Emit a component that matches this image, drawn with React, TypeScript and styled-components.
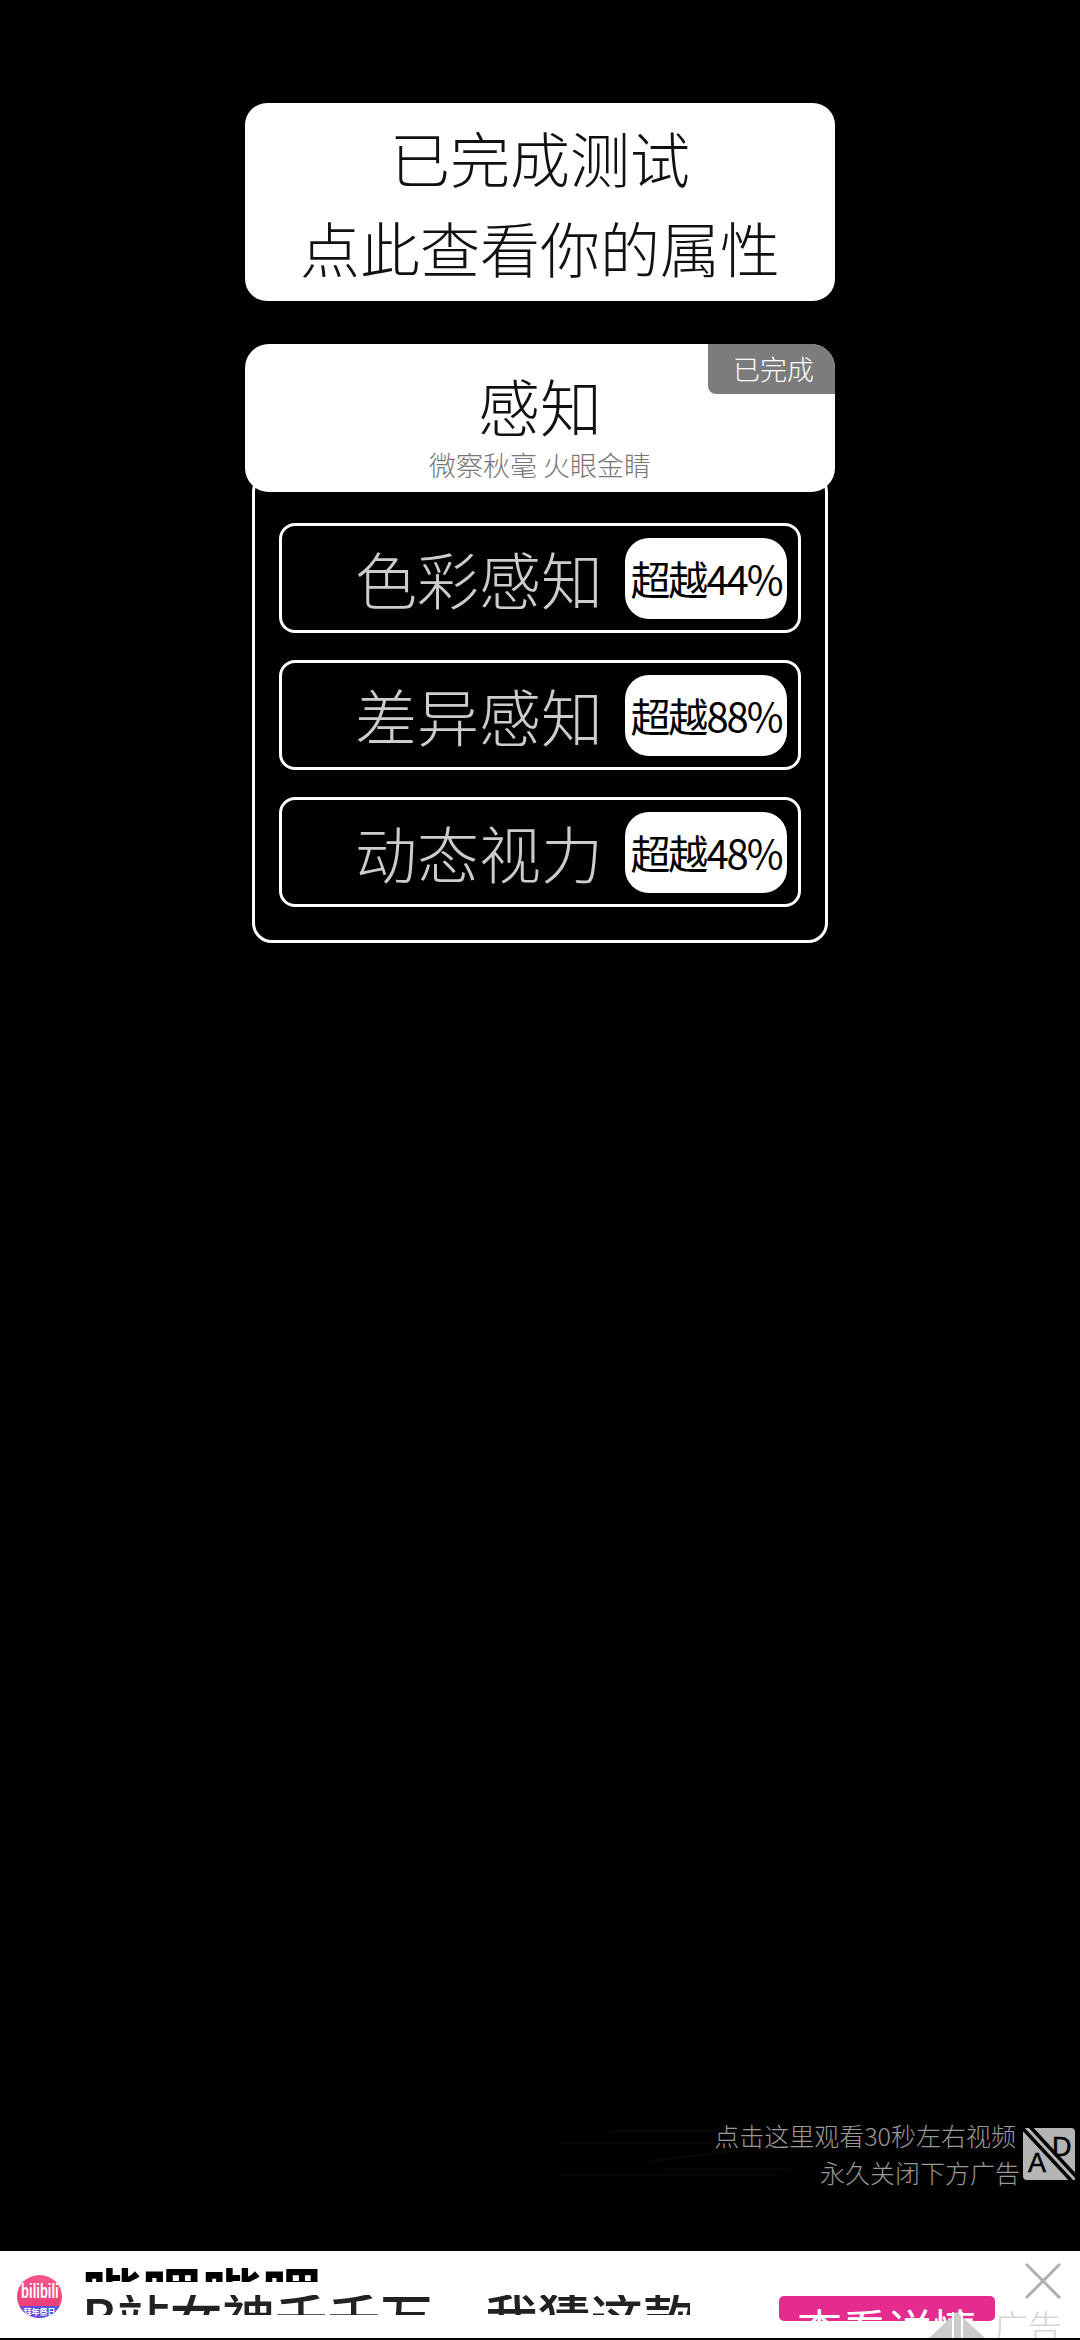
import React from 'react';
import styled, { createGlobalStyle } from 'styled-components';

const GlobalStyle = createGlobalStyle`
  html, body {
    margin: 0;
    padding: 0;
    background: #000;
    font-family: "Noto Sans CJK SC", "Noto Sans", sans-serif;
  }
`;

const Page = styled.div`
  width: 1080px;
  height: 2340px;
  display: flex;
  flex-direction: column;
  overflow: hidden;
  background: #000;
`;

const Main = styled.main`
  flex: 1;
  padding-top: 103px;
  display: flex;
  flex-direction: column;
  align-items: center;
`;

const ResultCard = styled.div`
  width: 590px;
  height: 198px;
  box-sizing: border-box;
  padding-top: 9px;
  background: #fff;
  border-radius: 22px;
  color: #111;
  font-size: 60px;
  font-weight: 300;
  line-height: 90px;
  text-align: center;
`;

const Section = styled.section`
  width: 590px;
  margin-top: 43px;
  display: flex;
  flex-direction: column;
  align-items: center;
`;

const SectionHead = styled.div`
  position: relative;
  z-index: 1;
  width: 100%;
  height: 148px;
  box-sizing: border-box;
  padding-top: 19px;
  background: #fff;
  border-radius: 24px;
  overflow: hidden;
  text-align: center;
`;

const SectionTitle = styled.div`
  color: #111;
  font-size: 62px;
  font-weight: 300;
  line-height: 84px;
`;

const SectionSub = styled.div`
  color: #777;
  font-size: 27px;
  font-weight: 300;
  line-height: 36px;
`;

const DoneBadge = styled.div`
  position: absolute;
  top: 0;
  right: 0;
  width: 127px;
  height: 50px;
  box-sizing: border-box;
  padding-left: 25px;
  background: #7c7c7c;
  border-bottom-left-radius: 8px;
  color: #fff;
  font-size: 27px;
  font-weight: 300;
  line-height: 49px;
  text-align: left;
`;

const RowsBox = styled.div`
  width: 576px;
  margin-top: -20px;
  box-sizing: border-box;
  padding: 48px 24px 33px;
  border: 3px solid #fff;
  border-radius: 20px;
  display: flex;
  flex-direction: column;
  gap: 27px;
`;

const Row = styled.div`
  height: 110px;
  box-sizing: border-box;
  padding-right: 11px;
  border: 3px solid #fff;
  border-radius: 16px;
  display: flex;
  justify-content: flex-end;
  align-items: center;
  gap: 22px;
`;

const RowName = styled.div`
  color: #ccc;
  font-size: 62px;
  font-weight: 300;
  white-space: nowrap;
`;

const ScorePill = styled.div`
  width: 162px;
  height: 81px;
  background: #fff;
  border-radius: 24px;
  display: flex;
  justify-content: center;
  align-items: center;
  color: #000;
  font-size: 40px;
  font-weight: 400;
  letter-spacing: -2px;
  white-space: nowrap;
`;

const Notice = styled.div`
  position: relative;
  margin-bottom: 60px;
  padding-right: 5px;
  display: flex;
  justify-content: flex-end;
  align-items: center;
  gap: 3px;
`;

const NoticeGhost = styled.svg`
  position: absolute;
  left: 550px;
  top: 8px;
`;

const NoticeText = styled.div`
  position: relative;
  color: #999;
  font-size: 25px;
  font-weight: 300;
  line-height: 37px;
  text-align: right;
  white-space: nowrap;
`;

const NoticeFirstLine = styled.div`
  margin-right: 4px;
`;

const Banner = styled.div`
  position: relative;
  height: 87px;
  box-sizing: border-box;
  background: #fff;
  display: flex;
  align-items: flex-start;
  overflow: hidden;
  margin-bottom: 2px;
`;

const AppIcon = styled.div`
  width: 45px;
  height: 43px;
  margin: 24px 0 0 17px;
  flex: none;
  border-radius: 50%;
  background: linear-gradient(180deg, #f5568c 0%, #ee3f7a 70%);
  overflow: hidden;
  display: flex;
  flex-direction: column;
  align-items: center;
`;

const AppIconWord = styled.div`
  flex: 1;
  padding-top: 6px;
  color: #fff;
  font-family: "Liberation Sans", sans-serif;
  font-size: 20px;
  font-weight: 700;
  line-height: 20px;
  transform: scaleX(0.65);
`;

const AppIconStrip = styled.div`
  width: 100%;
  height: 12px;
  background: linear-gradient(90deg, #7a3fe0, #3f63e8);
  color: #fff;
  font-size: 8px;
  font-weight: 700;
  line-height: 11px;
  text-align: center;
  white-space: nowrap;
`;

const AdCopy = styled.div`
  width: 608px;
  margin: 17px 0 0 20px;
  flex: none;
  white-space: nowrap;
`;

const AdTitle = styled.div`
  height: 14px;
  overflow: hidden;
  color: #000;
  font-size: 60px;
  font-weight: 700;
  line-height: 47px;
`;

const AdLine = styled.div`
  height: 20px;
  margin-top: 13px;
  overflow: hidden;
  color: #222;
  font-size: 52.6px;
  font-weight: 500;
  line-height: 41px;
`;

const AdButton = styled.div`
  width: 216px;
  height: 25px;
  margin: 45px 0 0 89px;
  flex: none;
  box-sizing: border-box;
  padding-top: 10px;
  background: #e62b8f;
  border-radius: 5px;
  overflow: hidden;
  color: #fff;
  font-size: 45px;
  line-height: 46px;
  text-align: center;
  white-space: nowrap;
`;

const CloseIcon = styled.svg`
  position: absolute;
  top: 12px;
  right: 19px;
`;

const AdLogo = styled.svg`
  position: absolute;
  left: 929px;
  top: 61px;
`;

const AdTag = styled.div`
  position: absolute;
  top: 52px;
  left: 994px;
  color: #d4d4d4;
  font-size: 34px;
  font-weight: 300;
  line-height: 46px;
`;

const rows = [
  { name: '色彩感知', score: 44 },
  { name: '差异感知', score: 88 },
  { name: '动态视力', score: 48 },
];

const AdFreeIcon = () => (
  <svg width="52" height="52" viewBox="0 0 52 52">
    <rect width="52" height="52" rx="4" fill="#b5b5b5" />
    <text x="5" y="44" fontFamily="Liberation Sans, sans-serif" fontSize="27" stroke="#000" strokeWidth="0.5" fill="#000">A</text>
    <text x="29" y="28" fontFamily="Liberation Sans, sans-serif" fontSize="27" stroke="#000" strokeWidth="0.5" fill="#000">D</text>
    <line x1="2" y1="-2" x2="54" y2="54" stroke="#000" strokeWidth="10" />
    <line x1="2" y1="-2" x2="54" y2="54" stroke="#b5b5b5" strokeWidth="3" />
  </svg>
);

const App = () => {
  return <Page>
    <GlobalStyle />
    <Main>
      <ResultCard>
        已完成测试<br />点此查看你的属性
      </ResultCard>
      <Section>
        <SectionHead>
          <DoneBadge>已完成</DoneBadge>
          <SectionTitle>感知</SectionTitle>
          <SectionSub>微察秋毫 火眼金睛</SectionSub>
        </SectionHead>
        <RowsBox>
          {rows.map(row => (
            <Row key={row.name}>
              <RowName>{row.name}</RowName>
              <ScorePill>超越{row.score}%</ScorePill>
            </Row>
          ))}
        </RowsBox>
      </Section>
    </Main>
    <Notice>
      <NoticeGhost width="260" height="60" viewBox="0 0 260 60">
        <path d="M10 18H170M60 6H190M10 50H230M100 36L200 24M110 44H240" stroke="#060606" strokeWidth="3" fill="none" />
      </NoticeGhost>
      <NoticeText>
        <NoticeFirstLine>点击这里观看30秒左右视频</NoticeFirstLine>
        永久关闭下方广告
      </NoticeText>
      <AdFreeIcon />
    </Notice>
    <Banner>
      <AppIcon>
        <AppIconWord>bilibili</AppIconWord>
        <AppIconStrip>拜年祭日</AppIconStrip>
      </AppIcon>
      <AdCopy>
        <AdTitle>哔哩哔哩</AdTitle>
        <AdLine>B站女神千千万，我猜这款</AdLine>
      </AdCopy>
      <AdButton>查看详情</AdButton>
      <AdLogo width="56" height="26" viewBox="0 0 56 26">
        <path d="M28 0L56 26H0Z" fill="#ccc" />
        <path d="M24 0V26M33 0V26" stroke="#fff" strokeWidth="2" />
      </AdLogo>
      <AdTag>广告</AdTag>
      <CloseIcon width="36" height="36" viewBox="0 0 36 36">
        <path d="M1 1L35 35M35 1L1 35" stroke="#b0b0b0" strokeWidth="3" fill="none" />
      </CloseIcon>
    </Banner>
  </Page>
}

export default App;
